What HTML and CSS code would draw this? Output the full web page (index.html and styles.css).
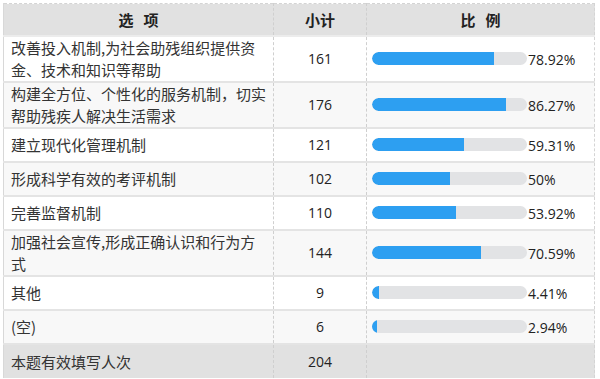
FILE: index.html
```html
<!DOCTYPE html>
<html lang="zh">
<head>
<meta charset="utf-8">
<link rel="stylesheet" href="styles.css">
</head>
<body>
<table class="stats">
  <colgroup>
    <col class="c-opt">
    <col class="c-num">
    <col class="c-pct">
  </colgroup>
  <thead>
    <tr>
      <th>选&nbsp;&nbsp;&nbsp;项</th>
      <th>小计</th>
      <th>比&nbsp;&nbsp;&nbsp;例</th>
    </tr>
  </thead>
  <tbody>
    <tr>
      <td class="opt">改善投入机制,为社会助残组织提供资金、技术和知识等帮助</td>
      <td class="num">161</td>
      <td class="pct"><div class="bar"><div class="track"><div class="fill" style="width:78.92%"></div></div><span class="val">78.92%</span></div></td>
    </tr>
    <tr class="alt">
      <td class="opt">构建全方位、个性化的服务机制，切实帮助残疾人解决生活需求</td>
      <td class="num">176</td>
      <td class="pct"><div class="bar"><div class="track"><div class="fill" style="width:86.27%"></div></div><span class="val">86.27%</span></div></td>
    </tr>
    <tr>
      <td class="opt">建立现代化管理机制</td>
      <td class="num">121</td>
      <td class="pct"><div class="bar"><div class="track"><div class="fill" style="width:59.31%"></div></div><span class="val">59.31%</span></div></td>
    </tr>
    <tr class="alt">
      <td class="opt">形成科学有效的考评机制</td>
      <td class="num">102</td>
      <td class="pct"><div class="bar"><div class="track"><div class="fill" style="width:50%"></div></div><span class="val">50%</span></div></td>
    </tr>
    <tr>
      <td class="opt">完善监督机制</td>
      <td class="num">110</td>
      <td class="pct"><div class="bar"><div class="track"><div class="fill" style="width:53.92%"></div></div><span class="val">53.92%</span></div></td>
    </tr>
    <tr class="alt">
      <td class="opt">加强社会宣传,形成正确认识和行为方式</td>
      <td class="num">144</td>
      <td class="pct"><div class="bar"><div class="track"><div class="fill" style="width:70.59%"></div></div><span class="val">70.59%</span></div></td>
    </tr>
    <tr>
      <td class="opt">其他</td>
      <td class="num">9</td>
      <td class="pct"><div class="bar"><div class="track"><div class="fill" style="width:4.41%"></div></div><span class="val">4.41%</span></div></td>
    </tr>
    <tr class="alt">
      <td class="opt">(空)</td>
      <td class="num">6</td>
      <td class="pct"><div class="bar"><div class="track"><div class="fill" style="width:2.94%"></div></div><span class="val">2.94%</span></div></td>
    </tr>
  </tbody>
  <tfoot>
    <tr>
      <td class="opt">本题有效填写人次</td>
      <td class="num">204</td>
      <td class="pct"></td>
    </tr>
  </tfoot>
</table>
</body>
</html>
```
FILE: styles.css
```css
html, body {
  margin: 0;
  padding: 0;
  background: #ffffff;
}
body {
  padding: 3px 0 0 3px;
  font-family: "Noto Sans CJK SC", "Liberation Sans", sans-serif;
  color: #333333;
}
.stats {
  width: 591px;
  table-layout: fixed;
  border-collapse: collapse;
  border-top: 1px dashed #d4d4d4;
  border-left: 1px solid #d8d8d8;
  border-right: 1px dashed #d4d4d4;
}
.c-opt { width: 270px; }
.c-num { width: 93px; }
.c-pct { width: 228px; }
.stats th {
  height: 31px;
  padding: 0;
  background: #e1e1e1;
  font-size: 15px;
  line-height: 20px;
  font-weight: bold;
  color: #222222;
  text-align: center;
  border-bottom: 2px solid #ececec;
  border-left: 1px dashed #cfcfcf;
}
.stats td {
  padding: 0 6px;
  height: 32px;
  line-height: 22px;
  font-size: 15px;
  vertical-align: middle;
  border-bottom: 2px solid #e4e4e4;
  border-left: 1px dashed #cfcfcf;
}
.stats tr.alt td {
  background: #f8f8f8;
}
.stats tfoot td {
  background: #e1e1e1;
  border-bottom: none;
  height: 33px;
}
.stats td.opt {
  padding-left: 7px;
  padding-right: 4px;
  color: #333333;
}
.stats td.num {
  text-align: center;
  padding-left: 0;
  padding-right: 0;
  font-family: "Open Sans", "Liberation Sans", sans-serif;
  font-size: 14px;
  color: #222222;
}
.stats td.pct {
  padding-left: 5px;
  padding-right: 0;
}
.bar {
  display: flex;
  align-items: center;
  margin-top: -2px;
}
.track {
  width: 155px;
  height: 13px;
  border-radius: 7px;
  background: #e2e3e5;
  overflow: hidden;
  flex: none;
}
.fill {
  height: 100%;
  background: #2d9ff1;
  border-radius: 7px 0 0 7px;
}
.val {
  margin-left: 1px;
  font-family: "Open Sans", "Liberation Sans", sans-serif;
  font-size: 14px;
  color: #222222;
  line-height: 14px;
  padding-top: 4px;
}
```
